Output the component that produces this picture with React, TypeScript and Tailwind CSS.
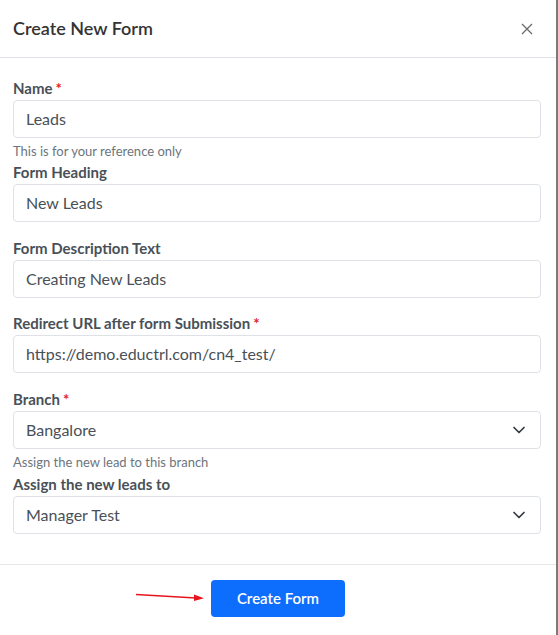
import React from 'react';

const font = { fontFamily: 'Lato, "Source Sans Pro", "Liberation Sans", sans-serif' };

function Label({ text, required }: { text: string; required?: boolean }) {
  return (
    <label className="block text-[15px] leading-[22px] font-bold text-[#495057]">
      {text}
      {required && <span className="text-[#e02424] ml-[3px]">*</span>}
    </label>
  );
}

function Help({ text, extra }: { text: string; extra?: string }) {
  return <p className={'mt-[3px] text-[13px] leading-[20px] text-[#6c757d] ' + (extra ?? '')}>{text}</p>;
}

function TextInput({ value }: { value: string }) {
  return (
    <div className="h-[38px] border border-[#dee2e6] rounded-[4px] px-3 flex items-center text-[16px] text-[#495057]">
      {value}
    </div>
  );
}

function SelectBox({ value }: { value: string }) {
  return (
    <div className="h-[38px] border border-[#dee2e6] rounded-[4px] pl-3 pr-[15px] flex items-center justify-between text-[16px] text-[#495057]">
      <span>{value}</span>
      <svg width="12" height="8" viewBox="0 0 12 8" fill="none">
        <path d="M1 1.5l5 5 5-5" stroke="#343a40" strokeWidth="1.7" strokeLinecap="round" strokeLinejoin="round" />
      </svg>
    </div>
  );
}

export default function App() {
  return (
    <div className="w-[558px] h-[635px] bg-white flex" style={font}>
      <div className="relative w-[556px] h-full flex flex-col">
        {/* header */}
        <div className="h-[58px] flex items-center justify-between pl-[13px] pr-[23px] border-b border-[#dee2e6]">
          <h2 className="text-[18px] font-semibold text-[#333]">Create New Form</h2>
          <svg width="12" height="12" viewBox="0 0 12 12">
            <path d="M1 1l10 10M11 1L1 11" stroke="#6b6b6b" strokeWidth="1.3" />
          </svg>
        </div>

        {/* body */}
        <div className="pl-[13px] pr-[15px] pt-[19px] pb-[30px] border-b border-[#e5e7eb]">
          <Label text="Name" required />
          <div className="mt-px">
            <TextInput value="Leads" />
          </div>
          <Help text="This is for your reference only" />

          <Label text="Form Heading" />
          <div className="mt-px mb-[15px]">
            <TextInput value="New Leads" />
          </div>

          <Label text="Form Description Text" />
          <div className="mt-px mb-[14px]">
            <TextInput value="Creating New Leads" />
          </div>

          <Label text="Redirect URL after form Submission" required />
          <div className="mt-px mb-[15px]">
            <TextInput value="https://demo.eductrl.com/cn4_test/" />
          </div>

          <Label text="Branch" required />
          <div className="mt-px">
            <SelectBox value="Bangalore" />
          </div>
          <Help text="Assign the new lead to this branch" extra="pb-px" />

          <Label text="Assign the new leads to" />
          <div className="mt-px">
            <SelectBox value="Manager Test" />
          </div>
        </div>

        {/* footer */}
        <div className="flex justify-center pt-[15px]">
          <button className="w-[134px] h-[37px] rounded-[4px] bg-[#0d6efd] text-white text-[15px] font-semibold">
            Create Form
          </button>
        </div>

        {/* annotation arrow */}
        <svg className="absolute left-[134px] top-[588px]" width="76" height="16" viewBox="0 0 76 16">
          <path d="M2 6.5 L62 10" stroke="#e8141c" strokeWidth="1.6" />
          <path d="M60 6.5 L70 10.3 L60 13 Z" fill="#e8141c" />
        </svg>
      </div>
      <div className="w-[2px] h-full bg-[#7a7a7a]" />
    </div>
  );
}
